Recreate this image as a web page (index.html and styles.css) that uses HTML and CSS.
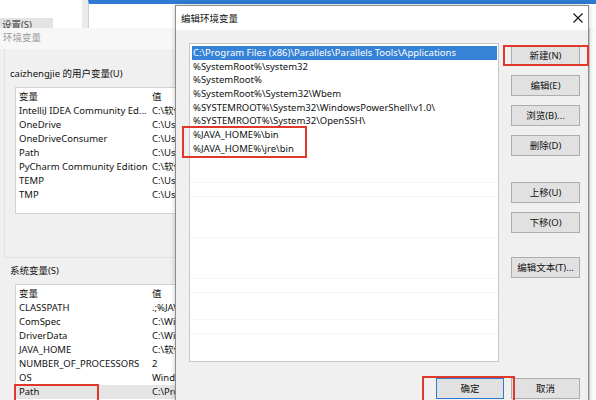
FILE: index.html
```html
<!DOCTYPE html>
<html lang="zh-CN">
<head>
<meta charset="utf-8">
<title>编辑环境变量</title>
<link rel="stylesheet" href="styles.css">
</head>
<body>
<div class="desk">
  <div class="bg-left"><div class="bg-btn">设置(S)</div></div>
  <div class="bg-sep"></div>
  <div class="bg-blue"></div>
  <div class="bg-right"></div>

  <section class="env">
    <div class="env-title">环境变量</div>
    <div class="env-body">
      <div class="group group-user">
        <div class="label">caizhengjie 的用户变量(U)</div>
        <div class="vlist vlist-user">
          <div class="vrow vhead"><span class="c1">变量</span><span class="c2">值</span></div>
          <div class="vrow"><span class="c1">IntelliJ IDEA Community Ed...</span><span class="c2">C:\软件</span></div>
          <div class="vrow"><span class="c1">OneDrive</span><span class="c2">C:\Users</span></div>
          <div class="vrow"><span class="c1">OneDriveConsumer</span><span class="c2">C:\Users</span></div>
          <div class="vrow"><span class="c1">Path</span><span class="c2">C:\Users</span></div>
          <div class="vrow"><span class="c1">PyCharm Community Edition</span><span class="c2">C:\软件</span></div>
          <div class="vrow"><span class="c1">TEMP</span><span class="c2">C:\Users</span></div>
          <div class="vrow"><span class="c1">TMP</span><span class="c2">C:\Users</span></div>
        </div>
      </div>
      <div class="group group-sys">
        <div class="label">系统变量(S)</div>
        <div class="vlist vlist-sys">
          <div class="vrow vhead"><span class="c1">变量</span><span class="c2">值</span></div>
          <div class="vrow"><span class="c1">CLASSPATH</span><span class="c2">.;%JAVA</span></div>
          <div class="vrow"><span class="c1">ComSpec</span><span class="c2">C:\Windows</span></div>
          <div class="vrow"><span class="c1">DriverData</span><span class="c2">C:\Windows</span></div>
          <div class="vrow"><span class="c1">JAVA_HOME</span><span class="c2">C:\软件</span></div>
          <div class="vrow"><span class="c1">NUMBER_OF_PROCESSORS</span><span class="c2">2</span></div>
          <div class="vrow"><span class="c1">OS</span><span class="c2">Windows</span></div>
          <div class="vrow vsel"><span class="c1">Path</span><span class="c2">C:\Program</span></div>
        </div>
      </div>
    </div>
  </section>

  <section class="dlg">
    <header class="dlg-title">
      <span>编辑环境变量</span>
      <svg class="close" width="10" height="10" viewBox="0 0 10 10"><path d="M0.5 0.5L9.5 9.5M9.5 0.5L0.5 9.5" stroke="#111" stroke-width="1.1" fill="none"/></svg>
    </header>
    <div class="dlg-body">
      <div class="plist">
        <div class="prow psel">C:\Program Files (x86)\Parallels\Parallels Tools\Applications</div>
        <div class="prow">%SystemRoot%\system32</div>
        <div class="prow">%SystemRoot%</div>
        <div class="prow">%SystemRoot%\System32\Wbem</div>
        <div class="prow">%SYSTEMROOT%\System32\WindowsPowerShell\v1.0\</div>
        <div class="prow">%SYSTEMROOT%\System32\OpenSSH\</div>
        <div class="prow">%JAVA_HOME%\bin</div>
        <div class="prow">%JAVA_HOME%\jre\bin</div>
      </div>
      <div class="side">
        <button class="btn">新建(N)</button>
        <button class="btn">编辑(E)</button>
        <button class="btn">浏览(B)...</button>
        <button class="btn">删除(D)</button>
        <button class="btn sp">上移(U)</button>
        <button class="btn">下移(O)</button>
        <button class="btn sp2">编辑文本(T)...</button>
      </div>
      <div class="foot">
        <button class="btn btn-def">确定</button>
        <button class="btn">取消</button>
      </div>
    </div>
  </section>

  <div class="mark mark-java"></div>
  <div class="mark mark-new"></div>
  <div class="mark mark-ok"></div>
  <div class="mark mark-path"></div>
</div>
</body>
</html>
```

FILE: styles.css
```css
* { box-sizing: border-box; margin: 0; padding: 0; }
html, body { width: 596px; height: 400px; overflow: hidden; }
body {
  background: #ffffff;
  font-family: "Noto Sans", "Noto Sans CJK SC", sans-serif;
  font-size: 9.5px;
  color: #111;
}
.desk { position: relative; width: 596px; height: 400px; overflow: hidden; }

/* background windows */
.bg-left { position: absolute; left: 0; top: 0; width: 82px; height: 28px; background: #fff; overflow: hidden; }
.bg-btn {
  margin-top: 18px; width: 53px; height: 16px; background: #e3e3e3;
  color: #444; line-height: 14px; padding-left: 2px; white-space: nowrap;
}
.bg-sep { position: absolute; left: 82px; top: 0; width: 6px; height: 28px; background: #ebebeb; }
.bg-blue { position: absolute; left: 88px; top: 0; right: 0; height: 28px; background: #fff; border-top: 4px solid #2f7bd3; border-left: 1px solid #cfcfcf; }
.bg-right { position: absolute; left: 589px; top: 28px; right: 0; bottom: 0; background: #fbfbfb; border-left: 1px solid #d6d6d6; }

/* 环境变量 window */
.env { position: absolute; left: 0; top: 28px; width: 200px; height: 380px; background: #f0f0f0; }
.env-title { height: 21px; line-height: 19px; padding-left: 3px; color: #9a9a9a; background: #f7f7f7; }
.env-body { display: flex; flex-direction: column; }
.group { border-left: 1px solid #e2e2e2; margin-left: 4px; }
.group-user { height: 209px; padding-top: 17px; border-bottom: 1px solid #e2e2e2; }
.group-sys { margin-top: 5px; padding-top: 0; border-left: none; }
.label { height: 15px; line-height: 15px; padding-left: 5px; white-space: nowrap; }
.group-sys .label { padding-left: 6px; }
.vlist { margin-left: 10px; background: #fff; border: 1px solid #d2d2d2; border-right: none; padding-top: 2px; overflow: hidden; }
.vlist-user { margin-top: 6px; height: 127px; }
.group-sys .vlist { margin-left: 11px; margin-top: 6px; height: 120px; }
.vrow { display: flex; height: 14px; line-height: 14px; white-space: nowrap; }
.vrow .c1 { width: 136px; padding-left: 3px; flex: none; overflow: hidden; }
.vrow .c2 { flex: none; }
.vsel { background: #e5e5e5; }

/* 编辑环境变量 dialog */
.dlg {
  position: absolute; left: 175px; top: 5px; width: 414px; height: 402px;
  background: #f0f0f0; border: 1px solid #8d8d8d;
  box-shadow: 0 0 5px rgba(0, 0, 0, 0.22);
}
.dlg-title {
  height: 24px; background: #fff; display: flex; align-items: center;
  justify-content: space-between; padding: 0 5px 0 5px;
}
.dlg-body {
  display: grid; grid-template-columns: 310px 69px; column-gap: 12px;
  grid-template-rows: 319px auto; padding: 13px 0 0 13px;
}
.plist {
  background: #fff; border: 1px solid #c8c8c8; padding: 2px 1px 0 2px;
  background-image: repeating-linear-gradient(to bottom, transparent 0, transparent 13.2px, #f5f5f5 13.2px, #f5f5f5 13.7px);
  background-position: 0 2px;
}
.prow { height: 13.7px; line-height: 13.7px; white-space: nowrap; overflow: hidden; padding-left: 1px; background: #fff; }
.psel { background: #3582d6; color: #fff; }
.side { display: flex; flex-direction: column; gap: 9px; padding-top: 2px; }
.btn {
  width: 69px; height: 21px; background: #e1e1e1; border: 1px solid #adadad;
  font-family: inherit; font-size: 9.5px; color: #111; line-height: 19px;
}
.side .sp { margin-top: 17px; }
.side .sp2 { margin-top: 15px; }
.foot { grid-column: 1 / 3; display: flex; justify-content: flex-end; gap: 7px; padding-top: 16px; }
.btn-def { width: 68px; border-color: #2f7bd3; }

/* red annotation boxes */
.mark { position: absolute; border: 2px solid #e0392b; }
.mark-java { left: 182px; top: 126px; width: 125px; height: 32px; }
.mark-new { left: 503px; top: 45px; width: 86px; height: 21px; }
.mark-ok { left: 422px; top: 376px; width: 93px; height: 30px; }
.mark-path { left: 14px; top: 384px; width: 85px; height: 24px; }
```
